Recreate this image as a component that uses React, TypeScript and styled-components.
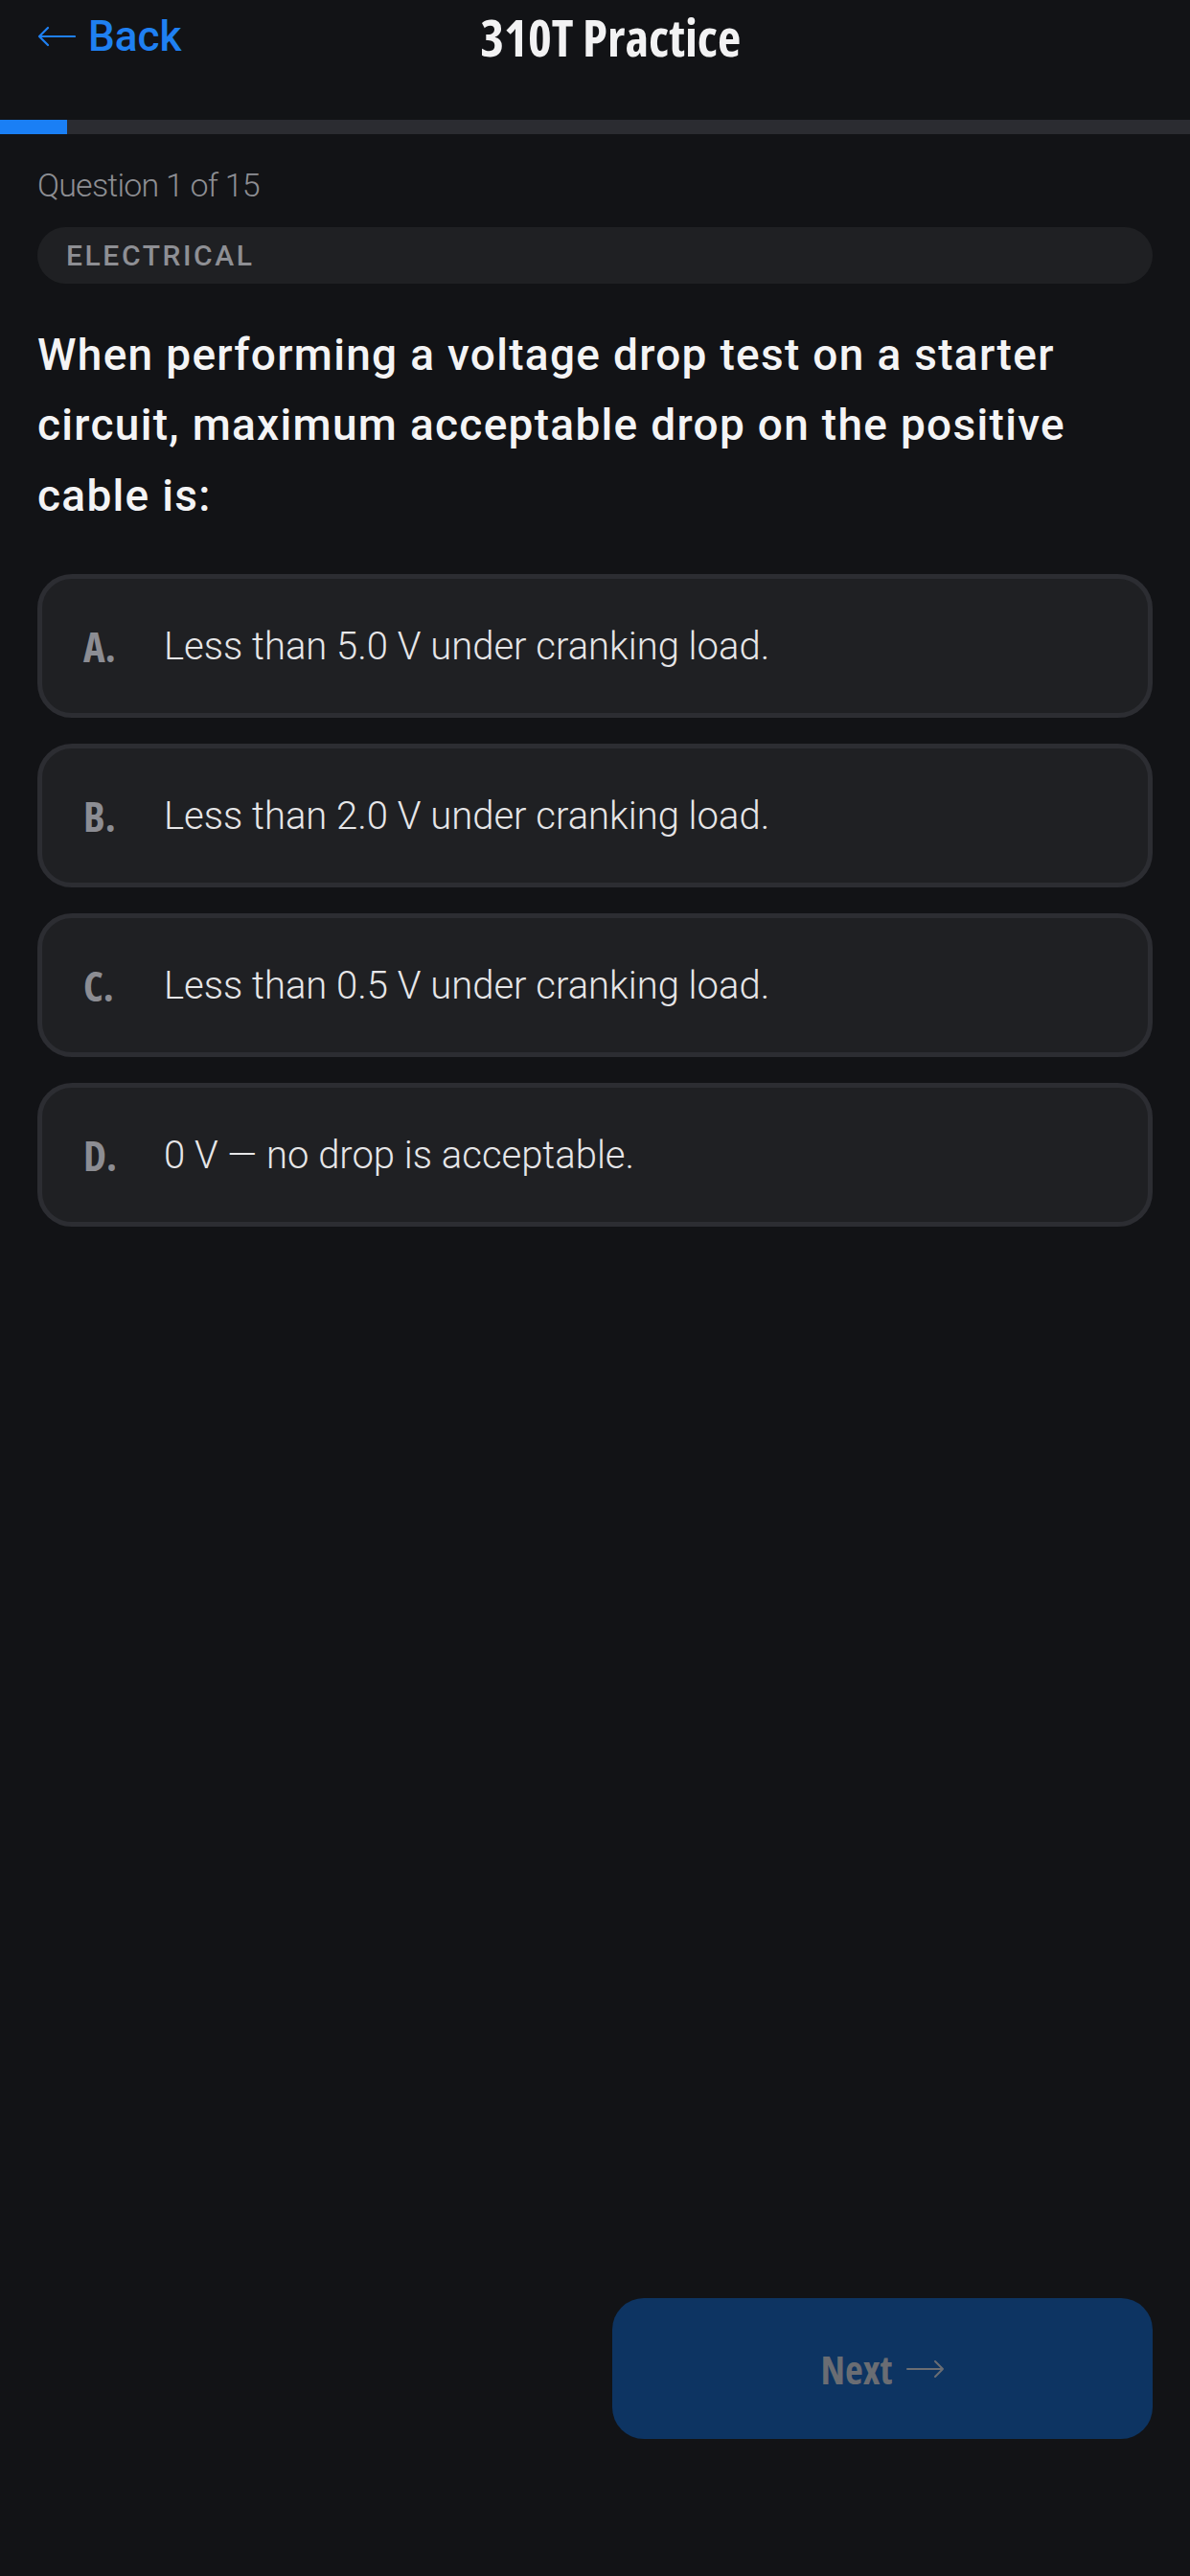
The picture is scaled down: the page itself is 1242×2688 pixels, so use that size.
import styled, { createGlobalStyle } from 'styled-components'

const GlobalStyle = createGlobalStyle`
    html, body {
        margin: 0;
        padding: 0;
        background: #121316;
    }
    body {
        font-family: Roboto, "Noto Sans", sans-serif;
        -webkit-font-smoothing: antialiased;
    }
    * {
        box-sizing: border-box;
    }
`

const options = [
    { letter: 'A', text: 'Less than 5.0 V under cranking load.' },
    { letter: 'B', text: 'Less than 2.0 V under cranking load.' },
    { letter: 'C', text: 'Less than 0.5 V under cranking load.' },
    { letter: 'D', text: '0 V — no drop is acceptable.' },
]

const current = 1
const total = 15

function ArrowLeft() {
    return (
        <svg width="40" height="22" viewBox="0 0 40 22" fill="none">
            <path d="M39 11H2M11 2L2 11l9 9" stroke="currentColor" strokeWidth="2.2" strokeLinecap="round" strokeLinejoin="round" />
        </svg>
    )
}

function ArrowRight() {
    return (
        <svg width="40" height="20" viewBox="0 0 40 20" fill="none">
            <path d="M1 10h37M30 2l8 8-8 8" stroke="currentColor" strokeWidth="2" strokeLinecap="round" strokeLinejoin="round" />
        </svg>
    )
}

export default function App() {
    return (
        <>
            <GlobalStyle />
            <PageSld>
                <HeaderSld>
                    <BackSld>
                        <ArrowLeft />
                        <span>Back</span>
                    </BackSld>
                    <TitleSld>310T Practice</TitleSld>
                    <span />
                </HeaderSld>

                <TrackSld>
                    <FillSld style={{ width: `${(current / total) * 84.7}%` }} />
                </TrackSld>

                <MainSld>
                    <CounterSld>Question {current} of {total}</CounterSld>
                    <CategorySld>ELECTRICAL</CategorySld>
                    <QuestionSld>
                        When performing a voltage drop test on a starter circuit, maximum acceptable drop on the positive cable is:
                    </QuestionSld>

                    <OptionListSld>
                        {options.map((o) => (
                            <OptionSld key={o.letter}>
                                <LetterSld>{o.letter}.</LetterSld>
                                <OptionTextSld>{o.text}</OptionTextSld>
                            </OptionSld>
                        ))}
                    </OptionListSld>
                </MainSld>

                <FooterSld>
                    <NextSld disabled>
                        <span>Next</span>
                        <ArrowRight />
                    </NextSld>
                </FooterSld>
            </PageSld>
        </>
    )
}

const PageSld = styled.div`
    min-height: 100vh;
    display: flex;
    flex-direction: column;
`

const HeaderSld = styled.header`
    display: grid;
    grid-template-columns: auto 1fr 118px;
    align-items: center;
    height: 76px;
    padding: 0 39px;
`

const BackSld = styled.button`
    display: flex;
    align-items: center;
    gap: 13px;
    padding: 0;
    border: 0;
    background: none;
    color: #1f80f2;
    font-family: Roboto, sans-serif;
    font-weight: 500;
    font-size: 44px;
    cursor: pointer;
`

const TitleSld = styled.h1`
    margin: 0;
    text-align: center;
    color: #f2f2f3;
    font-family: "Open Sans", sans-serif;
    font-stretch: 75%;
    font-weight: 700;
    font-size: 53px;
`

const TrackSld = styled.div`
    height: 15px;
    margin-top: 49px;
    background: #2b2c31;
`

const FillSld = styled.div`
    height: 100%;
    background: #1a7ff5;
`

const MainSld = styled.main`
    flex: 1;
    padding: 0 39px;
`

const CounterSld = styled.div`
    margin-top: 32px;
    color: #8d8e93;
    font-weight: 300;
    font-size: 34px;
    letter-spacing: -0.8px;
    line-height: 1.25;
`

const CategorySld = styled.div`
    display: flex;
    align-items: center;
    height: 59px;
    margin-top: 22px;
    padding: 0 30px;
    border-radius: 30px;
    background: #1f2023;
    color: #8e8f94;
    font-weight: 500;
    font-size: 30px;
    letter-spacing: 2.6px;
`

const QuestionSld = styled.h2`
    margin: 38px 0 0;
    color: #f4f4f5;
    font-weight: 500;
    font-size: 46px;
    letter-spacing: 1.3px;
    line-height: 1.6;
`

const OptionListSld = styled.div`
    display: flex;
    flex-direction: column;
    gap: 27px;
    margin-top: 45px;
`

const OptionSld = styled.button`
    display: flex;
    align-items: center;
    height: 150px;
    padding: 0 43px;
    border: 5px solid #2c2d32;
    border-radius: 36px;
    background: #1f2023;
    text-align: left;
    cursor: pointer;
`

const LetterSld = styled.span`
    flex: none;
    width: 84px;
    color: #8c8d93;
    font-family: "Open Sans", sans-serif;
    font-stretch: 75%;
    font-weight: 700;
    font-size: 43px;
`

const OptionTextSld = styled.span`
    color: #e6e6e8;
    font-family: Roboto, sans-serif;
    font-weight: 300;
    font-size: 40px;
`

const FooterSld = styled.footer`
    display: grid;
    grid-template-columns: 1fr 1fr;
    gap: 36px;
    padding: 0 39px 143px;
`

const NextSld = styled.button`
    grid-column: 2;
    display: flex;
    align-items: center;
    justify-content: center;
    gap: 14px;
    height: 147px;
    border: 0;
    border-radius: 33px;
    background: #0d3462;
    color: #6a6d73;
    font-family: "Open Sans", sans-serif;
    font-stretch: 75%;
    font-weight: 700;
    font-size: 41px;
    cursor: default;
`
